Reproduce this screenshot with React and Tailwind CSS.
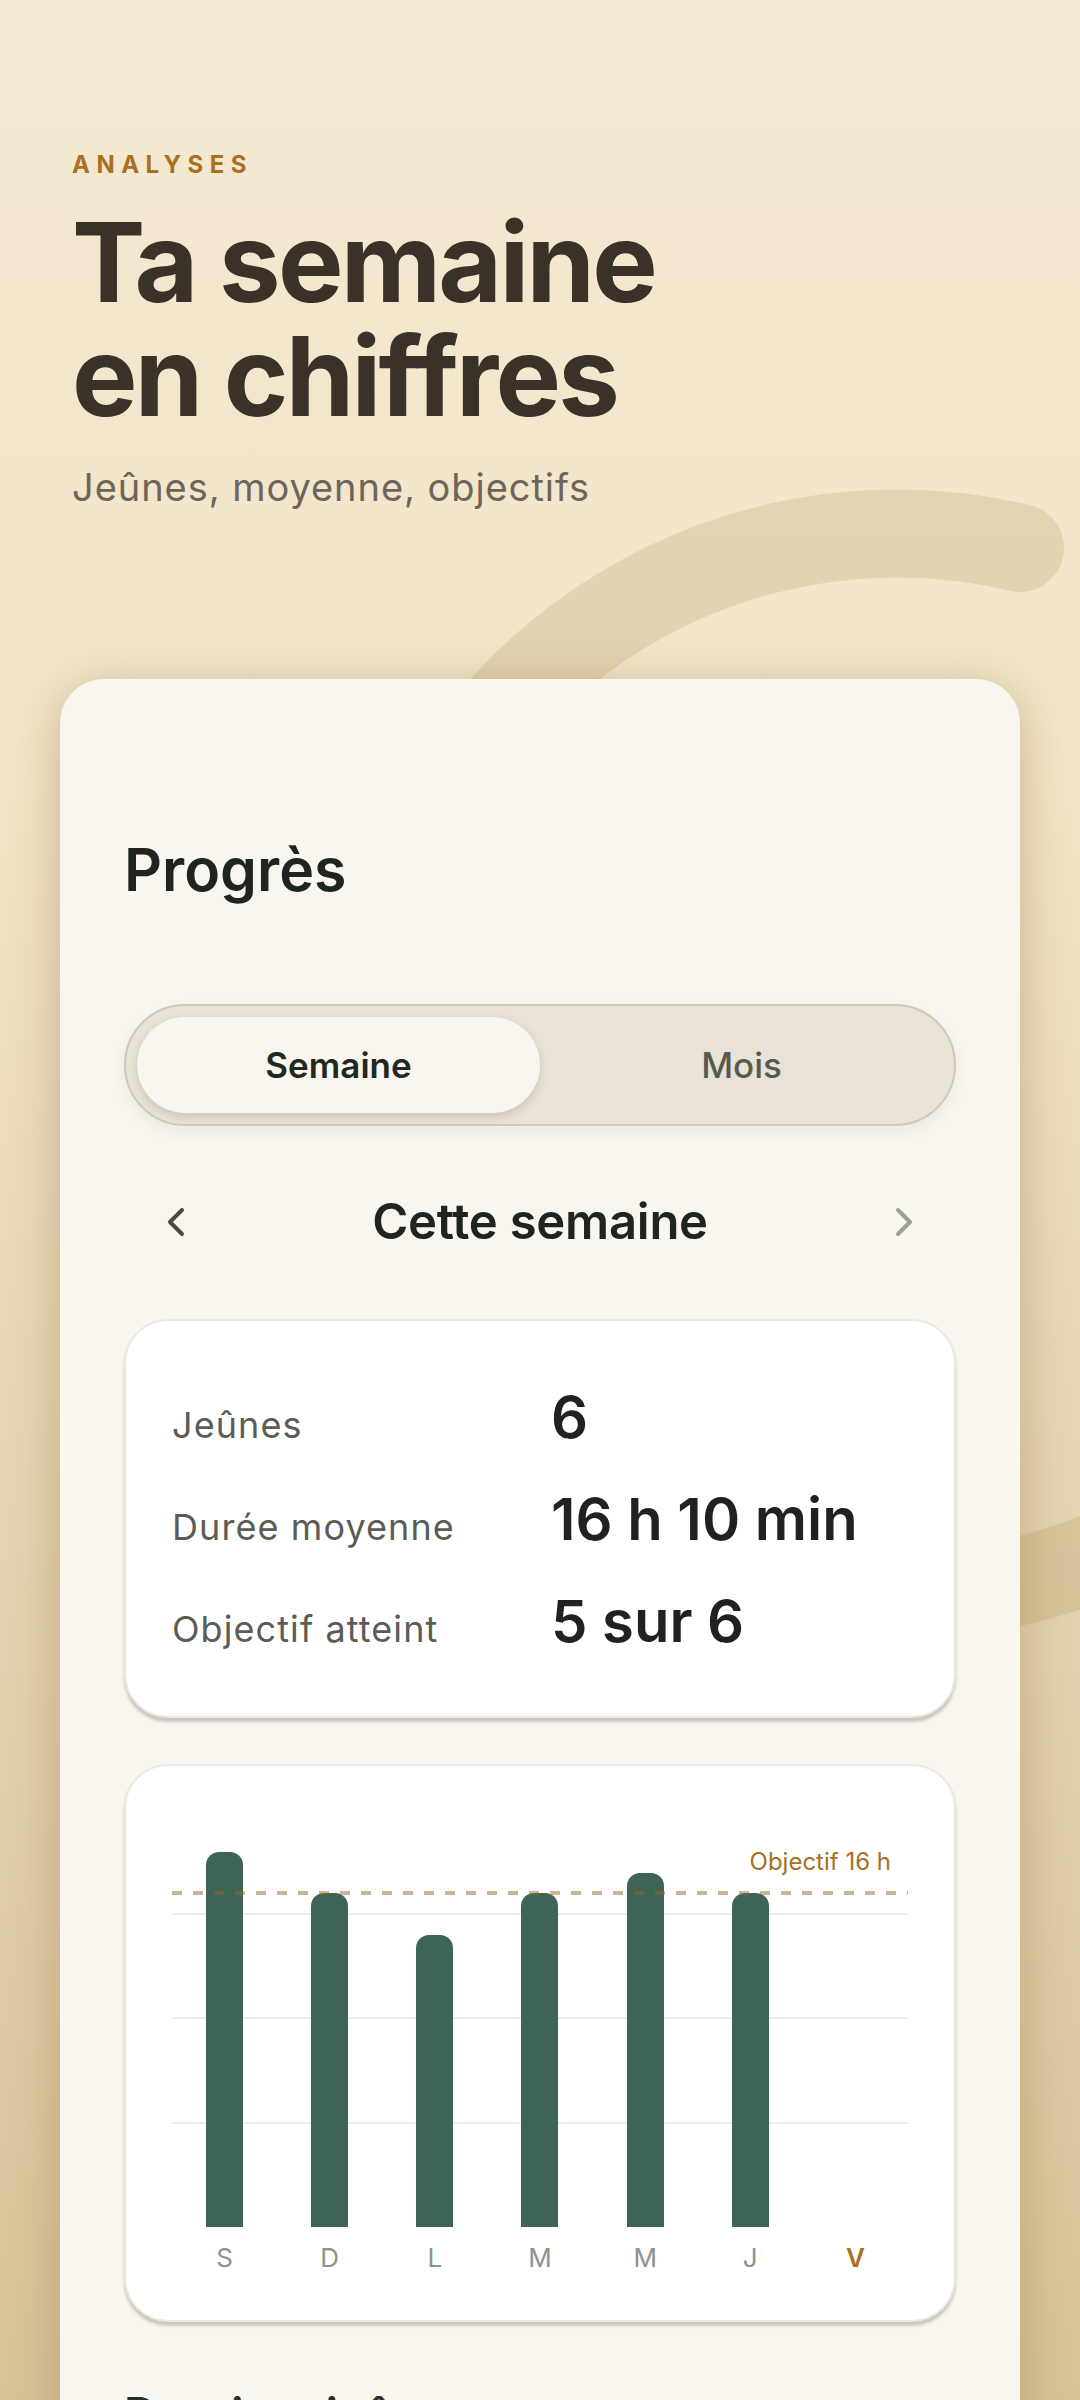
import React from 'react';
import { ChevronLeft, ChevronRight } from 'lucide-react';

const days = [
  { label: 'S', hours: 18 },
  { label: 'D', hours: 16 },
  { label: 'L', hours: 14 },
  { label: 'M', hours: 16 },
  { label: 'M', hours: 17 },
  { label: 'J', hours: 16 },
  { label: 'V', hours: 0, today: true },
];

const stats = [
  { label: 'Jeûnes', value: '6' },
  { label: 'Durée moyenne', value: '16 h 10 min' },
  { label: 'Objectif atteint', value: '5 sur 6' },
];

const MAX_HOURS = 20;

function BackgroundArc() {
  return (
    <svg
      className="absolute left-0 top-0 pointer-events-none"
      width="1080"
      height="2400"
      viewBox="0 0 1080 2400"
    >
      <path
        d="M 1357 1330 A 531 531 0 1 1 1020 548"
        fill="none"
        stroke="#a58d4e"
        strokeOpacity="0.2"
        strokeWidth="88"
        strokeLinecap="round"
      />
    </svg>
  );
}

function PeriodToggle() {
  return (
    <div className="mt-[98px] h-[122px] rounded-full border-2 border-[#cfc9bc] bg-[#e8e3d6] p-[11px] flex shadow-[0_6px_14px_rgba(90,80,60,0.08)]">
      <button className="flex-1 rounded-full bg-[#f9f6ef] text-[35px] font-semibold text-[#23271f] shadow-[0_4px_10px_rgba(70,60,40,0.18)]">
        Semaine
      </button>
      <button className="flex-1 rounded-full text-[35px] font-medium text-[#575a50]">
        Mois
      </button>
    </div>
  );
}

function WeekNav() {
  return (
    <div className="mt-[44px] h-[104px] flex items-center justify-between">
      <button className="w-[104px] h-[104px] flex items-center justify-center text-[#4a4b44]">
        <ChevronLeft size={48} strokeWidth={2} />
      </button>
      <span className="text-[49px] font-semibold text-[#1f2420] tracking-[-0.005em]">Cette semaine</span>
      <button className="w-[104px] h-[104px] flex items-center justify-center text-[#9ca197]">
        <ChevronRight size={48} strokeWidth={2} />
      </button>
    </div>
  );
}

function StatsCard() {
  return (
    <div className="mt-[45px] rounded-[44px] border-2 border-[#ebe8e0] bg-white px-[46px] pt-[62px] pb-[61px] shadow-[0_4px_3px_rgba(70,60,40,0.25)]">
      <div className="flex flex-col gap-[34px]">
        {stats.map(s => (
          <div key={s.label} className="flex items-baseline">
            <span className="w-[379px] text-[36px] leading-[40px] tracking-[0.03em] text-[#5a5c55]">{s.label}</span>
            <span className="text-[58px] leading-[68px] font-semibold text-[#1f231f]">{s.value}</span>
          </div>
        ))}
      </div>
    </div>
  );
}

function WeekChart() {
  return (
    <div className="mt-[46px] rounded-[44px] border-2 border-[#ebe8e0] bg-white px-[46px] pt-[44px] pb-[47px] shadow-[0_4px_3px_rgba(70,60,40,0.25)]">
      <div className="relative h-[417px]">
        {/* grid lines at 15h, 10h, 5h */}
        <div className="absolute left-0 right-0 top-[103px] h-[2px] bg-[#efede7]" />
        <div className="absolute left-0 right-0 top-[207px] h-[2px] bg-[#efede7]" />
        <div className="absolute left-0 right-0 top-[312px] h-[2px] bg-[#efede7]" />

        <div className="absolute inset-0 flex items-end">
          {days.map((d, i) => (
            <div key={i} className="flex-1 h-full flex items-end justify-center">
              {d.hours > 0 && (
                <div
                  className="w-[37px] rounded-t-[13px] bg-[#3e6455]"
                  style={{ height: `${(d.hours / MAX_HOURS) * 100}%` }}
                />
              )}
            </div>
          ))}
        </div>

        {/* objective line */}
        <svg className="absolute left-0 top-[81px]" width="736" height="4" viewBox="0 0 736 4">
          <line x1="0" y1="2" x2="736" y2="2" stroke="#94661c" strokeOpacity="0.48" strokeWidth="4" strokeDasharray="10 11" />
        </svg>
        <span className="absolute right-[17px] top-[37px] text-[24px] leading-[29px] text-[#a8701f]">Objectif 16 h</span>
      </div>
      <div className="mt-[15px] flex">
        {days.map((d, i) => (
          <span
            key={i}
            className={
              d.today
                ? 'flex-1 text-center text-[26px] leading-[31px] font-semibold text-[#a8701f]'
                : 'flex-1 text-center text-[26px] leading-[31px] text-[#8c938b]'
            }
          >
            {d.label}
          </span>
        ))}
      </div>
    </div>
  );
}

export default function App() {
  return (
    <div className="relative min-h-[2400px] overflow-hidden font-[Inter,sans-serif] bg-[linear-gradient(180deg,#f4e9d2_0%,#f1e4c8_30%,#e6d6b3_55%,#d6c196_100%)]">
      <BackgroundArc />

      {/* Header */}
      <div className="relative px-[72px] pt-[150px]">
        <p className="text-[24px] leading-[29px] font-bold tracking-[0.27em] text-[#a8701f]">ANALYSES</p>
        <h1 className="mt-[26px] text-[110px] leading-[114px] font-bold tracking-[-0.025em] text-[#3a3129]">
          Ta semaine
          <br />
          en chiffres
        </h1>
        <p className="mt-[30px] text-[38px] leading-[48px] tracking-[0.025em] text-[#6e645a]">Jeûnes, moyenne, objectifs</p>
      </div>

      {/* Progress card */}
      <div className="relative mx-[60px] mt-[168px] rounded-[44px] bg-[#f9f6ef] px-[64px] pt-[155px] pb-[120px] shadow-[0_8px_50px_rgba(130,95,40,0.34)]">
        <h2 className="text-[59px] leading-[72px] font-semibold text-[#1f2420]">Progrès</h2>
        <PeriodToggle />
        <WeekNav />
        <StatsCard />
        <WeekChart />
        <h3 className="mt-[64px] text-[46px] leading-[56px] font-semibold text-[#2a2d28]">Derniers jeûnes</h3>
      </div>
    </div>
  );
}
